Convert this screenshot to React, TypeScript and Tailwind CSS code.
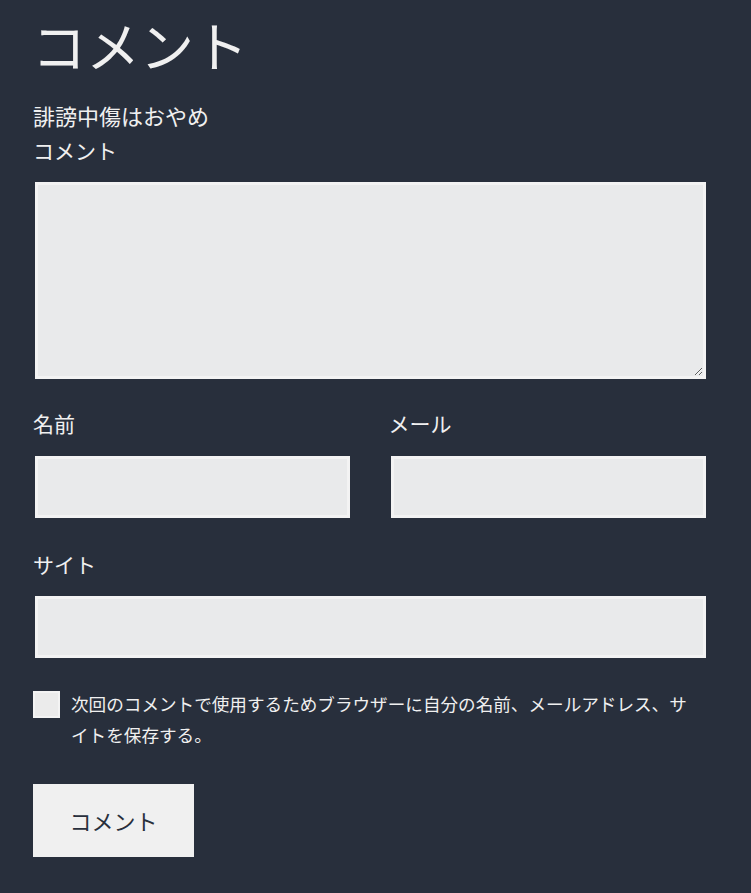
import React from "react";

export default function App() {
  return (
    <div className="min-h-[893px] w-full bg-[#282f3c] text-[#f0f0f0] font-['Noto_Sans_CJK_JP','Noto_Sans',sans-serif] pl-[33px] pr-[45px] pt-[12px]">
      <h1 className="text-[54px] leading-[65px] font-normal -ml-[1px]">コメント</h1>
      <p className="mt-[20px] text-[22px] leading-[36px]">誹謗中傷はおやめ</p>
      <label className="block text-[21px] leading-[34px]">コメント</label>
      <textarea className="mt-[15px] ml-[2px] block w-[calc(100%-2px)] h-[197px] bg-[#e9eaeb] border-[3px] border-[#f3f3f3] outline-none resize-y text-[#222]" />
      <div className="mt-[26px] grid grid-cols-2 gap-x-[40px]">
        <div>
          <label className="block text-[21px] leading-[36px]">名前</label>
          <input className="mt-[15px] ml-[2px] block w-[calc(100%-2px)] h-[62px] bg-[#e9eaeb] border-[3px] border-[#f3f3f3] outline-none" />
        </div>
        <div>
          <label className="block text-[21px] leading-[36px] -ml-[1px]">メール</label>
          <input className="mt-[15px] ml-[1px] block w-[calc(100%-1px)] h-[62px] bg-[#e9eaeb] border-[3px] border-[#f3f3f3] outline-none" />
        </div>
      </div>
      <label className="mt-[28px] block text-[21px] leading-[36px]">サイト</label>
      <input className="mt-[14px] ml-[2px] block w-[calc(100%-2px)] h-[62px] bg-[#e9eaeb] border-[3px] border-[#f3f3f3] outline-none" />
      <div className="mt-[30px] flex items-start gap-[11px]">
        <span className="mt-[3px] block w-[27px] h-[27px] shrink-0 bg-[#ebebeb] border-[2px] border-[#f3f3f3]" />
        <p className="text-[17.6px] leading-[31px] w-[625px]">
          次回のコメントで使用するためブラウザーに自分の名前、メールアドレス、サイトを保存する。
        </p>
      </div>
      <button className="mt-[34px] block w-[161px] h-[73px] bg-[#f0f0f0] text-[#282f3c] text-[22px]">
        コメント
      </button>
    </div>
  );
}
